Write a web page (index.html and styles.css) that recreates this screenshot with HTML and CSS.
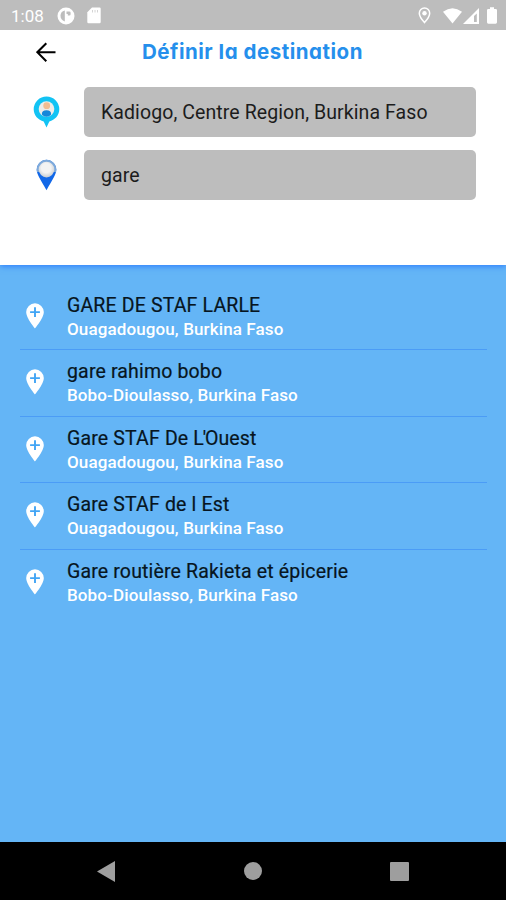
FILE: index.html
```html
<!DOCTYPE html>
<html lang="fr">
<head>
<meta charset="utf-8">
<title>Définir la destination</title>
<link rel="stylesheet" href="styles.css">
</head>
<body>
<svg class="defs" width="0" height="0" aria-hidden="true">
  <symbol id="place" viewBox="0 0 18 26">
    <path fill="#fff" d="M9 .3A8.800 8.800 0 0 0 .2 9.100C.2 15.300 9 25.500 9 25.500s8.800-10.200 8.800-16.400A8.800 8.800 0 0 0 9 .3z"/>
    <path stroke="#42a5f5" stroke-width="1.900" d="M9 4.200v9.800M4.100 9.100h9.800"/>
  </symbol>
</svg>
<div class="screen">
  <div class="status">
    <span class="clock">1:08</span>
    <svg class="app" width="18" height="18" viewBox="0 0 18 18"><circle cx="9" cy="9" r="8.500" fill="#fff"/><path fill="#bdbdbd" d="M7.800 3.500V14.500q-4.300-1.500-4.300-5.700T7.800 3.500z"/><path fill="#bdbdbd" d="M9.500 4.500h2.800q1.300 0 1.300 1.300v1.400q0 1.300-1.300 1.300h-1.500V7H9.500z"/></svg>
    <svg class="sd" width="14" height="17" viewBox="0 0 14 17"><path fill="#fff" d="M5 .5h7.500q1.200 0 1.200 1.200v13.400q0 1.200-1.200 1.200h-11Q.3 16.300.3 15.100V5.200z"/><path stroke="#d4d4d4" stroke-width="1" d="M5.500 3v2.500M8 3v2.500M10.500 3v2.500"/></svg>
    <span class="space"></span>
    <svg class="loc" width="13" height="17" viewBox="0 0 13 17"><path fill="none" stroke="#fff" stroke-width="1.500" d="M6.500 1A5.200 5.200 0 0 0 1.300 6.200C1.300 9.800 6.500 15.600 6.500 15.600s5.200-5.800 5.200-9.400A5.200 5.200 0 0 0 6.500 1z"/><circle cx="6.500" cy="6.300" r="2.200" fill="#fff"/></svg>
    <svg class="wifi" width="19" height="16" viewBox="0 0 19 16"><path fill="#fff" d="M0 3.800Q9.500-3.200 19 3.800L9.500 15.500z"/></svg>
    <svg class="cell" width="16" height="16" viewBox="0 0 16 16"><path fill="#fff" d="M0 16 16 0v16z"/><path fill="#bdbdbd" d="M11 8 13.800 5.500V14H11z"/></svg>
    <svg class="battery" width="10" height="17" viewBox="0 0 10 17"><path fill="#fff" d="M3 .3h4V2h1.700q1.300 0 1.300 1.300v12Q10 16.700 8.700 16.700H1.300Q0 16.700 0 15.300v-12Q0 2 1.300 2H3z"/></svg>
  </div>
  <header class="panel">
    <div class="bar">
      <svg class="back" width="20" height="20" viewBox="0 0 20 20"><path fill="none" stroke="#000" stroke-width="2" d="M19.500 10.200H1.800M10.300 1.200l-9 9 9 9"/></svg>
      <h1>Définir la destination</h1>
    </div>
    <div class="field">
      <svg class="marker" width="27" height="32" viewBox="0 0 27 32"><path fill="#12c3f4" d="M13.500.5A12.800 12.800 0 0 0 .7 13.200c0 6.300 4.500 10.700 10 12.300l2.800 6 2.800-6c5.500-1.600 10-6 10-12.300A12.800 12.800 0 0 0 13.500.5z"/><circle cx="13.500" cy="13" r="7.800" fill="#eeece9"/><circle cx="13.700" cy="9.700" r="3.400" fill="#f3bd91"/><path fill="#1687d9" d="M8.800 18.500q0-4.200 4.700-4.200t4.700 4.200q-2 2.300-4.700 2.300t-4.700-2.300z"/></svg>
      <div class="input">Kadiogo, Centre Region, Burkina Faso</div>
    </div>
    <div class="field">
      <svg class="marker" width="27" height="32" viewBox="0 0 27 32"><defs><radialGradient id="ball" cx=".48" cy=".4" r=".6"><stop offset=".5" stop-color="#f3f3f3"/><stop offset="1" stop-color="#c7ccd2"/></radialGradient></defs><path fill="#1268e8" d="M13.500.8A9.800 9.800 0 0 0 3.700 10.500c0 5 3.600 9.500 9.800 20.700 6.200-11.200 9.800-15.700 9.800-20.700A9.800 9.800 0 0 0 13.500.8z"/><path fill="#7eaadb" d="M13.500.8A9.800 9.800 0 0 0 4 13h19A9.800 9.800 0 0 0 13.500.8z"/><circle cx="13.500" cy="10.600" r="7.800" fill="url(#ball)"/></svg>
      <div class="input">gare</div>
    </div>
  </header>
  <main class="results">
    <div class="row"><svg class="pin"><use href="#place"/></svg><div><div class="name">GARE DE STAF LARLE</div><div class="city">Ouagadougou, Burkina Faso</div></div></div>
    <div class="row"><svg class="pin"><use href="#place"/></svg><div><div class="name">gare rahimo bobo</div><div class="city">Bobo-Dioulasso, Burkina Faso</div></div></div>
    <div class="row"><svg class="pin"><use href="#place"/></svg><div><div class="name">Gare STAF De <span class="tight">L'</span>Ouest</div><div class="city">Ouagadougou, Burkina Faso</div></div></div>
    <div class="row"><svg class="pin"><use href="#place"/></svg><div><div class="name">Gare STAF de l Est</div><div class="city">Ouagadougou, Burkina Faso</div></div></div>
    <div class="row"><svg class="pin"><use href="#place"/></svg><div><div class="name">Gare routière Rakieta et épicerie</div><div class="city">Bobo-Dioulasso, Burkina Faso</div></div></div>
  </main>
  <nav class="nav">
    <svg width="18" height="21" viewBox="0 0 18 21"><path fill="#9e9e9e" d="M18 0v21L0 10.500z"/></svg>
    <svg width="18" height="18" viewBox="0 0 18 18"><circle cx="9" cy="9" r="9" fill="#9e9e9e"/></svg>
    <svg width="19" height="19" viewBox="0 0 19 19"><rect width="19" height="19" rx="1" fill="#9e9e9e"/></svg>
  </nav>
</div>
</body>
</html>
```
FILE: styles.css
```css
* { box-sizing: border-box; }
body { margin: 0; font-family: Roboto, sans-serif; }
svg { display: block; flex: none; }
.defs { position: absolute; }
.screen { width: 506px; height: 900px; display: flex; flex-direction: column; overflow: hidden; background: #64b5f6; }
.status { position: relative; z-index: 1; height: 30px; flex: none; background: #bdbdbd; color: #fff; display: flex; align-items: center; padding: 1px 9px 0 11px; }
.clock { font-size: 17px; width: 46px; }
.sd { margin-left: 12px; }
.space { flex: 1; }
.loc { margin-right: 12px; }
.cell { margin: 0 8px 0 1px; }
.panel { height: 235px; flex: none; background: #fff; box-shadow: 0 1px 6px #2979ff; }
.bar { height: 57px; display: flex; align-items: flex-start; padding: 12px 0 0 36px; }
h1 { margin: -2px 0 0 86px; font: 700 20.5px/24px Inter, sans-serif; font-feature-settings: "cv11"; letter-spacing: .52px; color: #258fec; white-space: nowrap; }
.field { display: flex; align-items: center; padding: 0 30px 0 33px; margin-bottom: 13px; }
.input { flex: 1; height: 50px; margin-left: 24px; padding-left: 17px; border-radius: 5px; background: #bdbdbd; color: #1c1c1c; font-size: 19.5px; letter-spacing: .09px; line-height: 51px; white-space: nowrap; }
.results { flex: 1; padding: 18.6px 19px 0 20px; }
.row { height: 66.5px; display: flex; align-items: flex-start; padding-top: 10px; border-bottom: 1.5px solid #4b9cf6; }
.row:last-child { border-bottom: 0; }
.pin { width: 18px; height: 26px; margin: 9px 0 0 6px; }
.row > div { margin-left: 23px; }
.name { font-size: 19.5px; line-height: 24px; letter-spacing: .16px; color: #071521; -webkit-text-stroke: .2px #071521; white-space: nowrap; }
.tight { letter-spacing: -1.2px; }
.city { margin-top: -1px; font-size: 17px; line-height: 24px; letter-spacing: .12px; font-weight: 500; color: #fff; white-space: nowrap; }
.nav { height: 58px; flex: none; background: #000; display: flex; align-items: center; justify-content: space-between; padding: 0 97px; }
```
